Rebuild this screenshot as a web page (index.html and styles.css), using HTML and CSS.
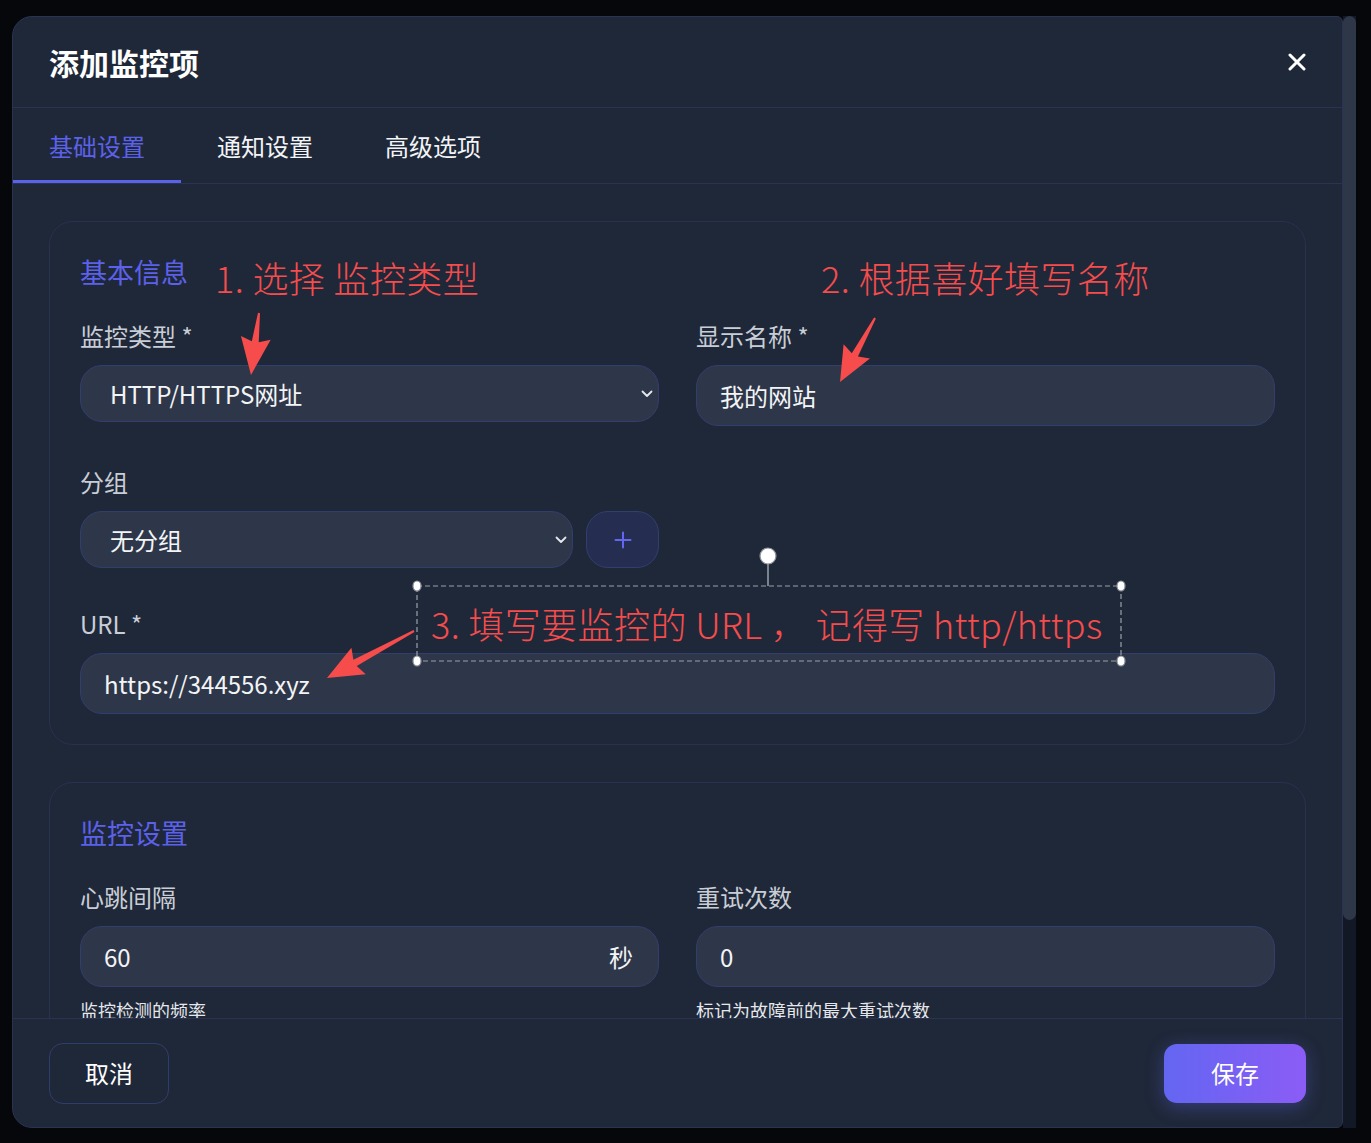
FILE: index.html
```html
<!DOCTYPE html>
<html lang="zh-CN">
<head>
  <meta charset="UTF-8">
  <title>添加监控项</title>
  <meta name="viewport" content="width=device-width, initial-scale=1.0">
  <link rel="stylesheet" href="styles.css">
</head>
<body>
  <div class="screen">
    <div class="modal">
      <!-- Header -->
      <div class="modal-header">
        <div class="modal-title">添加监控项</div>
        <button class="close-btn" aria-label="关闭">
          <svg width="18" height="18" viewBox="0 0 18 18"><path d="M2 2L16 16M16 2L2 16" stroke="#fff" stroke-width="3" stroke-linecap="round"/></svg>
        </button>
      </div>
      <!-- Tabs -->
      <div class="tabs">
        <div class="tab active">基础设置</div>
        <div class="tab">通知设置</div>
        <div class="tab">高级选项</div>
      </div>
      <!-- Body -->
      <div class="modal-body">
        <div class="section">
          <div class="section-title">基本信息</div>
          <div class="form-grid">
            <div class="field">
              <div class="field-label">监控类型 *</div>
              <div class="control select">
                <span>HTTP/HTTPS网址</span>
                <svg class="chevron" width="12" height="8" viewBox="0 0 12 8"><path d="M1.5 1.5L6 6L10.5 1.5" fill="none" stroke="#e5e7eb" stroke-width="1.8" stroke-linecap="round" stroke-linejoin="round"/></svg>
              </div>
            </div>
            <div class="field">
              <div class="field-label">显示名称 *</div>
              <div class="control">我的网站</div>
            </div>
            <div class="field">
              <div class="field-label">分组</div>
              <div class="group-row">
                <div class="control select">
                  <span>无分组</span>
                  <svg class="chevron" width="12" height="8" viewBox="0 0 12 8"><path d="M1.5 1.5L6 6L10.5 1.5" fill="none" stroke="#e5e7eb" stroke-width="1.8" stroke-linecap="round" stroke-linejoin="round"/></svg>
                </div>
                <button class="add-btn" aria-label="新建分组">
                  <svg width="18" height="18" viewBox="0 0 18 18"><path d="M9 1.5V16.5M1.5 9H16.5" stroke="#6366f1" stroke-width="2" stroke-linecap="round"/></svg>
                </button>
              </div>
            </div>
            <div class="field field-wide">
              <div class="field-label">URL *</div>
              <div class="control">https://344556.xyz</div>
            </div>
          </div>
        </div>

        <div class="section">
          <div class="section-title">监控设置</div>
          <div class="form-grid">
            <div class="field">
              <div class="field-label">心跳间隔</div>
              <div class="control">
                <span>60</span>
                <span class="unit">秒</span>
              </div>
              <div class="field-help">监控检测的频率</div>
            </div>
            <div class="field">
              <div class="field-label">重试次数</div>
              <div class="control">0</div>
              <div class="field-help">标记为故障前的最大重试次数</div>
            </div>
          </div>
        </div>
      </div>
      <!-- Footer -->
      <div class="modal-footer">
        <button class="btn btn-cancel">取消</button>
        <button class="btn btn-save">保存</button>
      </div>
    </div>
    <div class="scrollbar"><div class="scrollbar-thumb"></div></div>
  </div>

  <!-- Screenshot annotations drawn on top -->
  <div class="annotations">
    <svg class="marks" width="1371" height="1143" viewBox="0 0 1371 1143">
      <g fill="#f64c4c">
        <polygon transform="translate(259 313) rotate(97.35)" points="0,-1 29,-3.5 25,-15 62.5,0 25,15 29,3.5 0,1"/>
        <polygon transform="translate(875 318) rotate(118.67)" points="0,-1 42,-3.5 38,-15 72.9,0 38,15 42,3.5 0,1"/>
        <polygon transform="translate(414 631) rotate(151.62)" points="0,-1 67,-3.5 63,-15 98.9,0 63,15 67,3.5 0,1"/>
      </g>
      <rect x="417" y="586" width="704" height="75" fill="none" stroke="#9aa0a8" stroke-width="1.2" stroke-dasharray="5 3"/>
      <line x1="768" y1="564" x2="768" y2="586" stroke="#9aa0a8" stroke-width="1.5"/>
      <circle cx="768" cy="556" r="8" fill="#fff" stroke="#8b9099" stroke-width="1.2"/>
      <g fill="#fff" stroke="#8b9099" stroke-width="1.2">
        <ellipse cx="417" cy="586" rx="4" ry="5"/>
        <ellipse cx="1121" cy="586" rx="4" ry="5"/>
        <ellipse cx="417" cy="661" rx="4" ry="5"/>
        <ellipse cx="1121" cy="661" rx="4" ry="5"/>
      </g>
    </svg>
    <div class="mark-text mark-1">1. 选择 监控类型</div>
    <div class="mark-text mark-2">2. 根据喜好填写名称</div>
    <div class="mark-text mark-3">3. 填写要监控的 URL ， 记得写 http/https</div>
  </div>
</body>
</html>
```

FILE: styles.css
```css
:root {
  --bg: #06070b;
  --modal-bg: #1f2839;
  --line: #2a3351;
  --card-line: #283150;
  --field-bg: #2e3749;
  --field-line: #333e6e;
  --indigo: #5c61ea;
  --label: #c9ced6;
  --text: #f3f4f6;
  --mark: #f64c4c;
}
* {
  box-sizing: border-box;
}
body {
  margin: 0;
  background: var(--bg);
  font-family: "Noto Sans CJK SC", "Noto Sans", sans-serif;
  color: var(--text);
}
button {
  font-family: inherit;
  cursor: pointer;
}
.screen {
  display: flex;
  align-items: flex-start;
  padding: 16px 0 0 12px;
}
/* Modal */
.modal {
  width: 1331px;
  height: 1112px;
  display: flex;
  flex-direction: column;
  background: var(--modal-bg);
  border: 1px solid var(--line);
  border-radius: 20px 6px 6px 20px;
  overflow: hidden;
}
.modal-header {
  flex: none;
  height: 91px;
  display: flex;
  align-items: center;
  justify-content: space-between;
  padding: 0 36px;
  border-bottom: 1px solid var(--line);
}
.modal-title {
  font-size: 30px;
  font-weight: 700;
  line-height: 1;
  color: #fff;
}
.close-btn {
  width: 18px;
  height: 18px;
  padding: 0;
  border: none;
  background: none;
  display: flex;
}
/* Tabs */
.tabs {
  flex: none;
  height: 76px;
  display: flex;
  border-bottom: 1px solid var(--line);
}
.tab {
  display: flex;
  align-items: center;
  padding: 0 36px;
  font-size: 24px;
  color: var(--text);
}
.tab.active {
  color: var(--indigo);
  box-shadow: inset 0 -3px 0 var(--indigo);
}
/* Body */
.modal-body {
  flex: 1;
  min-height: 0;
  overflow: hidden;
  display: flex;
  flex-direction: column;
  gap: 37px;
  padding: 37px 36px 0 36px;
}
.section {
  flex: none;
  border: 1px solid var(--card-line);
  border-radius: 24px;
  padding: 30px;
}
.section-title {
  font-size: 27px;
  line-height: 40px;
  color: var(--indigo);
  margin-bottom: 26px;
}
.form-grid {
  display: grid;
  grid-template-columns: 1fr 1fr;
  column-gap: 37px;
  row-gap: 38px;
  align-items: start;
}
.field-wide {
  grid-column: 1 / -1;
}
.field-label {
  font-size: 24px;
  line-height: 36px;
  color: var(--label);
  margin-bottom: 11px;
}
.control {
  height: 61px;
  display: flex;
  align-items: center;
  justify-content: space-between;
  padding: 0 25px 0 23px;
  background: var(--field-bg);
  border: 1px solid var(--field-line);
  border-radius: 22px;
  font-size: 24px;
  color: var(--text);
}
.control.select {
  height: 57px;
  padding: 0 5px 0 29px;
}
.chevron {
  flex: none;
}
.unit {
  color: var(--text);
}
.group-row {
  display: flex;
  gap: 13px;
}
.group-row .control {
  flex: 1;
}
.add-btn {
  flex: none;
  width: 73px;
  height: 57px;
  display: flex;
  align-items: center;
  justify-content: center;
  padding: 0;
  background: #252e50;
  border: 1px solid var(--field-line);
  border-radius: 22px;
}
.field-help {
  margin-top: 10px;
  font-size: 18px;
  line-height: 26px;
  color: #e5e7eb;
}
/* Footer */
.modal-footer {
  flex: none;
  height: 109px;
  display: flex;
  align-items: center;
  justify-content: space-between;
  padding: 0 36px;
  border-top: 1px solid var(--line);
}
.btn {
  font-size: 24px;
  color: #fff;
  line-height: 1;
}
.btn-cancel {
  height: 61px;
  padding: 0 35px;
  background: transparent;
  border: 1px solid #323c6c;
  border-radius: 14px;
}
.btn-save {
  height: 59px;
  padding: 0 47px;
  border: none;
  border-radius: 13px;
  background: linear-gradient(90deg, #6366f1, #8b5cf6);
  box-shadow: 0 4px 18px rgba(99, 102, 241, 0.35);
}
/* Scrollbar */
.scrollbar {
  width: 13px;
  height: 1112px;
  background: #121826;
}
.scrollbar-thumb {
  height: 904px;
  background: #2e3748;
  border-radius: 7px;
}
/* Annotations */
.annotations {
  position: absolute;
  top: 0;
  left: 0;
  width: 1371px;
  height: 1143px;
  pointer-events: none;
}
.marks {
  position: absolute;
  top: 0;
  left: 0;
}
.mark-text {
  position: absolute;
  font-size: 36px;
  line-height: 36px;
  font-weight: 300;
  letter-spacing: 0.4px;
  color: var(--mark);
  white-space: nowrap;
}
.mark-1 { left: 215px; top: 259px; }
.mark-2 { left: 821px; top: 259px; }
.mark-3 { left: 431px; top: 605px; }
```
